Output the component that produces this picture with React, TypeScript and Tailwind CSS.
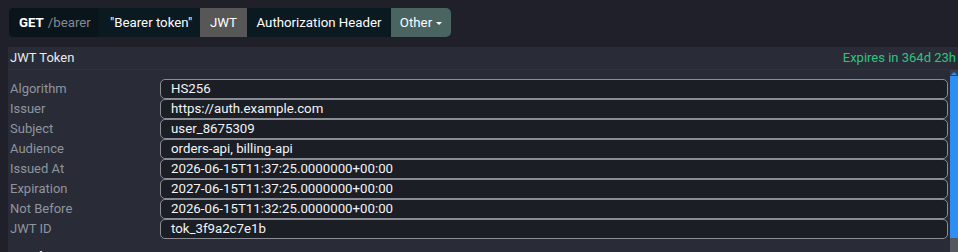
const claims = [
    { label: "Algorithm", value: "HS256" },
    { label: "Issuer", value: "https://auth.example.com" },
    { label: "Subject", value: "user_8675309" },
    { label: "Audience", value: "orders-api, billing-api" },
    { label: "Issued At", value: "2026-06-15T11:37:25.0000000+00:00" },
    { label: "Expiration", value: "2027-06-15T11:37:25.0000000+00:00" },
    { label: "Not Before", value: "2026-06-15T11:32:25.0000000+00:00" },
    { label: "JWT ID", value: "tok_3f9a2c7e1b" },
];

export default function App() {
    return (
        <div className="h-[252px] w-[958px] overflow-hidden bg-[#1f2029] text-[13px] text-white" style={{ fontFamily: "Roboto, 'Liberation Sans', sans-serif" }}>
            <div className="flex h-[47px] items-start pl-[9px] pt-[8px]">
                <div className="flex h-[29px] overflow-hidden rounded-[5px] bg-[#0b151c] text-[13.25px]">
                    <div className="flex w-[88px] items-center gap-1 bg-[#0a141b] pl-[10px]">
                        <span className="font-bold">GET</span>
                        <span className="text-[#858b93]">/bearer</span>
                    </div>
                    <div className="ml-[2px] flex w-[101px] items-center bg-[#0b1920] pl-[11px]">"Bearer token"</div>
                    <div className="flex w-[47px] items-center justify-center bg-[#575757]">JWT</div>
                    <div className="flex w-[144px] items-center justify-center bg-[#0b1920]">Authorization Header</div>
                    <div className="flex w-[60px] items-center justify-center gap-[4px] bg-[#4a6461]">
                        Other
                        <div className="mt-[1px] h-0 w-0 border-x-[3px] border-t-[3px] border-x-transparent border-t-white"></div>
                    </div>
                </div>
            </div>
            <div className="ml-[8px] flex h-[205px] flex-col bg-[#292c37]">
                <div className="flex h-[23px] items-center justify-between border-b border-[#30333f] pl-[2px] pr-[2px]">
                    <span className="text-[#e8eaee]">JWT Token</span>
                    <span className="text-[#2ec57d]">Expires in 364d 23h</span>
                </div>
                <div className="flex min-h-0 flex-1">
                    <div className="flex flex-1 flex-col pt-[9px] pr-[2px]">
                        {claims.map(c => (
                            <div key={c.label} className="flex h-[20px] items-center">
                                <span className="w-[152px] shrink-0 pl-[2px] text-[#8f959e]">{c.label}</span>
                                <div className="flex h-[20px] flex-1 items-center rounded-[5px] border border-[#8a8d93] bg-[#1b1e25] pl-[10px] text-[13.25px] text-[#f2f3f5]">{c.value}</div>
                            </div>
                        ))}
                        <div className="pl-[4px] pt-[8px] font-bold text-[#e8eaee]">Header</div>
                    </div>
                    <div className="flex w-[8px] flex-col bg-[#3a3d47]">
                        <div className="flex h-[6px] items-center justify-center">
                            <div className="h-0 w-0 border-x-[3px] border-b-[3px] border-x-transparent border-b-[#2f8ef5]"></div>
                        </div>
                        <div className="h-[162px] bg-[#2f8ef5]"></div>
                        <div className="flex-1 bg-[#55585f]"></div>
                    </div>
                </div>
            </div>
        </div>
    );
}
